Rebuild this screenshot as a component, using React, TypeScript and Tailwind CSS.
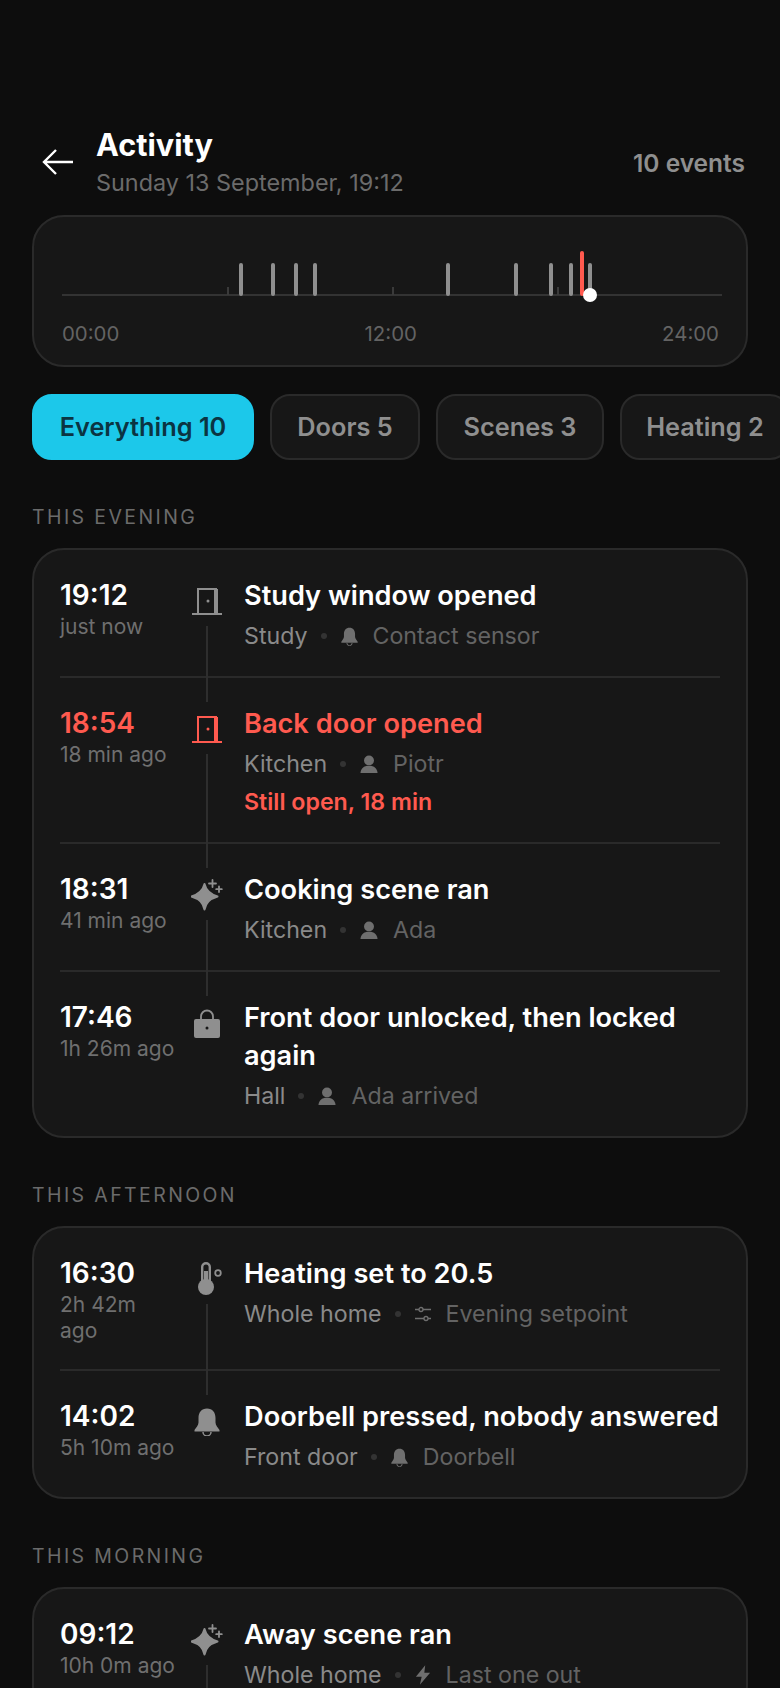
import type { ReactNode } from 'react';

type Glyph = 'door' | 'spark' | 'lock' | 'thermo' | 'bell' | 'person' | 'sliders' | 'bolt';

type Item = {
  time: string;
  ago: ReactNode;
  icon: Glyph;
  title: string;
  place: string;
  by: string;
  byIcon: Glyph;
  alert?: string;
  hot?: boolean;
  line?: boolean;
};

const Icon = ({ name, className }: { name: Glyph; className?: string }) => {
  switch (name) {
    case 'door':
      return (
        <svg viewBox="0 0 30 28" className={className} fill="none" stroke="currentColor" strokeWidth="2">
          <path d="M0 27h30" />
          <path d="M6 27V2h18v25" />
          <path d="M24 2v25" strokeWidth="4" />
          <circle cx="16" cy="14" r="1.500" fill="currentColor" stroke="none" />
        </svg>
      );
    case 'spark':
      return (
        <svg viewBox="0 0 32 32" className={className} fill="currentColor">
          <path d="M13.500 5c1.500 6.500 5 10 13 12.500-8 2.500-11.500 6-13 13-1.500-7-5-10.500-13-13 8-2.500 11.500-6 13-12.500z" stroke="currentColor" strokeWidth="2" strokeLinejoin="round" />
          <path d="M21.500 1v7M18 4.500h7M28 7.500v5.500M25.200 10.200h5.600" fill="none" stroke="currentColor" strokeWidth="1.800" strokeLinecap="round" />
        </svg>
      );
    case 'lock':
      return (
        <svg viewBox="0 0 26 29" className={className}>
          <path d="M7 11V7.500a6 6 0 0 1 12 0V11" fill="none" stroke="currentColor" strokeWidth="1.800" />
          <rect x="0" y="10" width="26" height="19" rx="2" fill="currentColor" />
          <circle cx="13" cy="19" r="1.500" fill="#171717" />
        </svg>
      );
    case 'thermo':
      return (
        <svg viewBox="0 0 30 34" className={className}>
          <path d="M10.200 20V5a3.800 3.800 0 0 1 7.600 0v15" fill="none" stroke="currentColor" strokeWidth="2.400" />
          <circle cx="14" cy="25" r="8" fill="currentColor" />
          <rect x="12" y="9" width="4" height="14" fill="currentColor" />
          <circle cx="26" cy="11" r="2.800" fill="none" stroke="currentColor" strokeWidth="1.800" />
        </svg>
      );
    case 'bell':
      return (
        <svg viewBox="0 0 26 28" className={className} fill="currentColor">
          <path d="M13 0.500c-5.500 0-8.500 4-8.500 9.500v4.500c0 3-2.500 5-4 7.500v1.500h25V22c-1.500-2.500-4-4.500-4-7.500V10c0-5.500-3-9.500-8.500-9.500z" />
          <path d="M9 24a4 4 0 0 0 8 0" fill="none" stroke="currentColor" strokeWidth="1.500" />
        </svg>
      );
    case 'person':
      return (
        <svg viewBox="0 0 20 20" className={className} fill="currentColor">
          <circle cx="10" cy="6" r="5.500" />
          <path d="M0.500 20c0.500-5 3.500-8 9.500-8s9 3 9.500 8z" />
        </svg>
      );
    case 'sliders':
      return (
        <svg viewBox="0 0 16 16" className={className} fill="none" stroke="currentColor" strokeWidth="1.300">
          <path d="M0 3.500h4M8 3.500h8M0 12.500h9M13 12.500h3" />
          <circle cx="6" cy="3.500" r="2" />
          <circle cx="11" cy="12.500" r="2" />
        </svg>
      );
    case 'bolt':
      return (
        <svg viewBox="0 0 18 22" className={className} fill="currentColor">
          <path d="M11.500 0L1 13h6.500L5.500 22 17 8.500h-6.500z" />
        </svg>
      );
  }
};

const evening: Item[] = [
  { time: '19:12', ago: 'just now', icon: 'door', title: 'Study window opened', place: 'Study', by: 'Contact sensor', byIcon: 'bell', line: true },
  { time: '18:54', ago: '18 min ago', icon: 'door', title: 'Back door opened', place: 'Kitchen', by: 'Piotr', byIcon: 'person', alert: 'Still open, 18 min', hot: true, line: true },
  { time: '18:31', ago: '41 min ago', icon: 'spark', title: 'Cooking scene ran', place: 'Kitchen', by: 'Ada', byIcon: 'person', line: true },
  { time: '17:46', ago: '1h 26m ago', icon: 'lock', title: 'Front door unlocked, then locked again', place: 'Hall', by: 'Ada arrived', byIcon: 'person' },
];

const afternoon: Item[] = [
  { time: '16:30', ago: '2h 42m ago', icon: 'thermo', title: 'Heating set to 20.5', place: 'Whole home', by: 'Evening setpoint', byIcon: 'sliders', line: true },
  { time: '14:02', ago: '5h 10m ago', icon: 'bell', title: 'Doorbell pressed, nobody answered', place: 'Front door', by: 'Doorbell', byIcon: 'bell' },
];

const morning: Item[] = [
  { time: '09:12', ago: '10h 0m ago', icon: 'spark', title: 'Away scene ran', place: 'Whole home', by: 'Last one out', byIcon: 'bolt', line: true },
];

const marks = [6.5, 7.67, 8.5, 9.2, 14.03, 16.5, 17.77, 18.52, 19.2];
const pct = (h: number) => `${(h / 24) * 100}%`;

const iconSizes: Record<Glyph, string> = {
  door: 'w-[30px] h-[28px]',
  spark: 'w-[32px] h-[32px]',
  lock: 'w-[26px] h-[29px]',
  thermo: 'w-[30px] h-[34px]',
  bell: 'w-[26px] h-[28px]',
  person: 'w-[18px] h-[18px]',
  sliders: 'w-[16px] h-[16px]',
  bolt: 'w-[16px] h-[20px]',
};

const metaSizes: Record<Glyph, string> = {
  ...iconSizes,
  bell: 'w-[17px] h-[19px]',
};

const Row = ({ item, first }: { item: Item; first: boolean }) => (
  <div className={`flex mx-[26px] ${first ? '' : 'border-t-2 border-[#2a2a2a]'}`}>
    <div className="w-[116px] shrink-0 pt-[27px] pb-[25px]">
      <div className={`text-[28px] leading-[36px] font-semibold ${item.hot ? 'text-[#ff5a4f]' : 'text-white'}`}>{item.time}</div>
      <div className="text-[21px] leading-[26px] mt-[1px] text-[#6f6f6f]">{item.ago}</div>
    </div>
    <div className="w-[62px] shrink-0 flex flex-col items-center pt-[36px]">
      <div className="h-[30px] flex items-center justify-center">
        <Icon name={item.icon} className={`${iconSizes[item.icon]} ${item.hot ? 'text-[#ff5a4f]' : 'text-[#8f8f8f]'}`} />
      </div>
      {item.line && <div className="w-[2px] flex-1 mt-[10px] -mb-[26px] bg-[#2e2e2e] relative" />}
    </div>
    <div className="flex-1 min-w-0 ml-[6px] pt-[27px] pb-[22px]">
      <div className={`text-[27.200px] leading-[38px] font-semibold ${item.hot ? 'text-[#ff5a4f]' : 'text-white'}`}>{item.title}</div>
      <div className="flex items-center mt-[3px] text-[23.200px] leading-[36px]">
        <span className="text-[#8a8a8a]">{item.place}</span>
        <span className="w-[6px] h-[6px] rounded-full bg-[#333333] ml-[13px] mr-[14px]" />
        <Icon name={item.byIcon} className={`${metaSizes[item.byIcon]} text-[#6f6f6f] mr-[15px]`} />
        <span className="text-[#636363]">{item.by}</span>
      </div>
      {item.alert && <div className="text-[23.200px] leading-[32px] mt-[4px] mb-[2px] font-semibold text-[#ff5a4f]">{item.alert}</div>}
    </div>
  </div>
);

const Section = ({ label, items }: { label: string; items: Item[] }) => (
  <section>
    <h2 className="text-[19.500px] leading-[26px] tracking-[2.400px] text-[#6b6b6b] uppercase mb-[18px] font-normal">{label}</h2>
    <div className="rounded-[32px] border-2 border-[#2a2a2a] bg-[#171717] overflow-hidden">
      {items.map((item, i) => (
        <Row key={item.time} item={item} first={i === 0} />
      ))}
    </div>
  </section>
);

const chips = [
  { label: 'Everything 10', w: 'w-[222px]', on: true },
  { label: 'Doors 5', w: 'w-[150px]' },
  { label: 'Scenes 3', w: 'w-[168px]' },
  { label: 'Heating 2', w: 'w-[170px]' },
];

export default function App() {
  return (
    <div className="h-[1688px] overflow-hidden bg-[#0d0d0d] px-[32px] pt-[126px]" style={{ fontFamily: 'Inter, "Noto Sans", sans-serif' }}>
      <header className="flex items-center h-[72px]">
        <svg viewBox="0 0 32 28" className="w-[32px] h-[28px] ml-[10px] text-white" fill="none" stroke="currentColor" strokeWidth="2.400">
          <path d="M31 14H2M14 2L2 14l12 12" />
        </svg>
        <div className="ml-[22px] flex-1">
          <h1 className="text-[30.700px] leading-[38px] font-bold text-white">Activity</h1>
          <p className="text-[23.400px] leading-[30px] mt-[4px] text-[#6b6b6b]">Sunday 13 September, 19:12</p>
        </div>
        <span className="text-[24.500px] font-semibold text-[#8f8f8f] mr-[3px] pt-[2px]">10 events</span>
      </header>

      <div className="mt-[17px] h-[152px] rounded-[32px] border-2 border-[#2a2a2a] bg-[#171717] pl-[28px] pr-[27px] pt-[34px]">
        <div className="relative h-[46px] -mr-[3px]">
          <div className="absolute left-0 right-0 top-[43px] h-[2px] bg-[#333333]" />
          {[6, 12, 18].map((h) => (
            <div key={h} className="absolute top-[36px] h-[8px] w-[2px] bg-[#3a3a3a]" style={{ left: pct(h) }} />
          ))}
          {marks.map((h) => (
            <div key={h} className="absolute top-[12px] h-[33px] w-[4px] -ml-[2px] rounded-full bg-[#8f8f8f]" style={{ left: pct(h) }} />
          ))}
          <div className="absolute top-0 h-[45px] w-[4px] -ml-[2px] rounded-full bg-[#ff5a4f]" style={{ left: pct(18.9) }} />
          <div className="absolute top-[37px] h-[14px] w-[14px] -ml-[7px] rounded-full bg-white" style={{ left: pct(19.2) }} />
        </div>
        <div className="flex justify-between mt-[23px] text-[20.400px] leading-[28px] text-[#636363]">
          <span>00:00</span>
          <span>12:00</span>
          <span>24:00</span>
        </div>
      </div>

      <div className="flex gap-[16px] mt-[27px] w-[800px]">
        {chips.map((c) => (
          <div
            key={c.label}
            className={`${c.w} h-[66px] shrink-0 rounded-[20px] flex items-center justify-center text-[25.300px] font-semibold border-2 ${
              c.on ? 'bg-[#1cc8ea] border-[#1cc8ea] text-[#0b3442]' : 'bg-[#171717] border-[#2a2a2a] text-[#8f8f8f]'
            }`}
          >
            {c.label}
          </div>
        ))}
      </div>

      <div className="mt-[44px] flex flex-col gap-[44px]">
        <Section label="This evening" items={evening} />
        <Section label="This afternoon" items={afternoon} />
        <Section label="This morning" items={morning} />
      </div>
    </div>
  );
}
